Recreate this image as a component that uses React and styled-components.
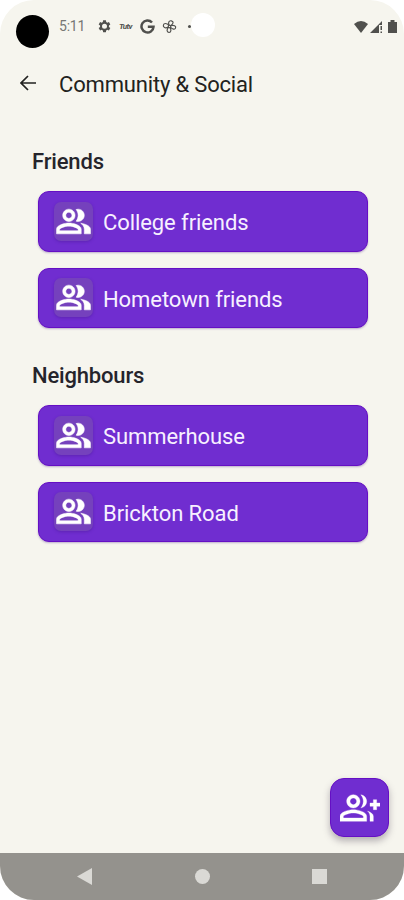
import React from "react"
import styled, { createGlobalStyle } from "styled-components"

const sections = [
  { title: "Friends", groups: ["College friends", "Hometown friends"] },
  { title: "Neighbours", groups: ["Summerhouse", "Brickton Road"] },
]

function GearIcon() {
  return (
    <Icon $size={15} viewBox="0 0 24 24">
      <path
        fillRule="evenodd"
        d="M9.8 2h4.4l.5 2.8 1.7 1 2.7-1 2.2 3.8-2.2 1.8v2.2l2.2 1.8-2.2 3.8-2.7-1-1.7 1-.5 2.8H9.8l-.5-2.8-1.7-1-2.7 1-2.2-3.8 2.2-1.8v-2.2L2.7 8.6l2.2-3.8 2.7 1 1.7-1zM12 7.6a4 4 0 1 0 0 8 4 4 0 0 0 0-8z"
      />
    </Icon>
  )
}

function GoogleIcon() {
  return (
    <Icon $size={15} viewBox="0 0 24 24">
      <path
        fill="none"
        stroke="currentColor"
        strokeWidth="4"
        d="M19.2 5.6A9.6 9.6 0 1 0 21.6 12.5H12.5"
      />
    </Icon>
  )
}

function FanIcon() {
  return (
    <Icon $size={15} viewBox="0 0 24 24">
      <g fill="none" stroke="currentColor" strokeWidth="1.9" transform="rotate(12 12 12)">
        <path d="M11.5 11C8 7 9 2.5 13 2.5s5 4 0 8" />
        <path d="M13.5 10.5c5-3 9-1 8.5 2s-5 3-8.500 0" />
        <path d="M12.5 13c4 3 4 8 .5 8.500s-5-4-2-8.500" />
        <path d="M10.5 13C6 17 2 15.500 2 12s4-5 9-1.500" />
        <circle cx="12" cy="12" r="2" />
      </g>
    </Icon>
  )
}

function GroupIcon() {
  return (
    <Icon $size={37} $stroke={0.35} viewBox="0 0 24 24">
      <path d="M16.67 13.13C18.04 14.06 19 15.32 19 17v3h4v-3c0-2.18-3.57-3.47-6.33-3.87z" />
      <path d="M15 12c2.21 0 4-1.79 4-4s-1.79-4-4-4c-.47 0-.91.1-1.33.24C14.5 5.27 15 6.58 15 8s-.5 2.73-1.33 3.76c.42.14.86.24 1.33.24z" />
      <path d="M9 12c2.21 0 4-1.79 4-4s-1.79-4-4-4-4 1.79-4 4 1.79 4 4 4zm0-6c1.1 0 2 .9 2 2s-.9 2-2 2-2-.9-2-2 .9-2 2-2z" />
      <path d="M9 13c-2.67 0-8 1.34-8 4v3h16v-3c0-2.66-5.33-4-8-4zm6 5H3v-.99C3.2 16.29 6.3 15 9 15s5.8 1.29 6 2v1z" />
    </Icon>
  )
}

function GroupAddIcon() {
  return (
    <Icon $size={40} $stroke={0.2} viewBox="0 0 24 24">
      <path d="M22 9V7h-2v2h-2v2h2v2h2v-2h2V9z" />
      <path d="M8 12c2.21 0 4-1.79 4-4s-1.79-4-4-4-4 1.79-4 4 1.79 4 4 4zm0-6c1.1 0 2 .9 2 2s-.9 2-2 2-2-.9-2-2 .9-2 2-2z" />
      <path d="M8 13c-2.67 0-8 1.34-8 4v3h16v-3c0-2.66-5.33-4-8-4zm6 5H2v-.99C2.2 16.29 5.3 15 8 15s5.8 1.29 6 2v1z" />
      <path d="M12.51 4.05C13.43 5.11 14 6.49 14 8s-.57 2.89-1.49 3.95C14.47 11.7 16 10.04 16 8s-1.53-3.7-3.49-3.95z" />
      <path d="M16.53 13.83C17.42 14.66 18 15.7 18 17v3h2v-3c0-1.45-1.59-2.51-3.47-3.17z" />
    </Icon>
  )
}

function StatusBar() {
  return (
    <Status>
      <Camera />
      <Time>5:11</Time>
      <Notifications>
        <GearIcon />
        <Badge>Tutv</Badge>
        <GoogleIcon />
        <FanIcon />
      </Notifications>
      <MoreDot />
      <Cutout />
      <System>
        <svg width="14" height="12" viewBox="0 0 14 12">
          <path fill="currentColor" d="M0 3Q7-3 14 3L7 12z" />
        </svg>
        <svg width="12" height="12" viewBox="0 0 12 12">
          <path fill="currentColor" d="M0 12L12 0V4H9V12z" />
          <path fill="currentColor" d="M10.5 5H12V9h-1.500zM10.5 10.5H12V12h-1.500z" />
        </svg>
        <svg width="9" height="13" viewBox="0 0 9 13">
          <path fill="currentColor" d="M0 2h2.500V0h4v2H9v11H0z" />
        </svg>
      </System>
    </Status>
  )
}

function App() {
  return (
    <Phone>
      <GlobalStyle />
      <StatusBar />
      <Header>
        <BackButton aria-label="Back">
          <svg width="16" height="16" viewBox="0 0 16 16" fill="none">
            <path d="M8 1L1 8l7 7M1 8h15" stroke="currentColor" strokeWidth="1.7" />
          </svg>
        </BackButton>
        <Title>Community &amp; Social</Title>
      </Header>
      <Main>
        {sections.map((section) => (
          <Section key={section.title}>
            <SectionTitle>{section.title}</SectionTitle>
            <List>
              {section.groups.map((group) => (
                <GroupButton key={group}>
                  <Tile>
                    <GroupIcon />
                  </Tile>
                  <GroupName>{group}</GroupName>
                </GroupButton>
              ))}
            </List>
          </Section>
        ))}
      </Main>
      <Fab aria-label="Add group">
        <GroupAddIcon />
      </Fab>
      <NavBar>
        <svg width="15" height="17" viewBox="0 0 15 17">
          <path fill="currentColor" d="M15 0v17L0 8.5z" />
        </svg>
        <HomeDot />
        <RecentSquare />
      </NavBar>
    </Phone>
  )
}

const GlobalStyle = createGlobalStyle`
  * {
    box-sizing: border-box;
  }
  body {
    margin: 0;
    background: #fff;
    font-family: Roboto, sans-serif;
  }
  button {
    border: 0;
    padding: 0;
    font: inherit;
  }
`
const Phone = styled.div`
  display: flex;
  flex-direction: column;
  width: 404px;
  height: 900px;
  overflow: hidden;
  border-radius: 34px;
  background: #f6f5ee;
`
const Icon = styled.svg`
  display: block;
  flex: none;
  width: ${(p) => p.$size}px;
  height: ${(p) => p.$size}px;
  fill: currentColor;
  stroke: currentColor;
  stroke-width: ${(p) => p.$stroke || 0};
`
const Status = styled.div`
  display: flex;
  align-items: center;
  flex: none;
  height: 52px;
  padding: 0 7px 0 16px;
  color: #50504d;
`
const Camera = styled.div`
  width: 33px;
  height: 33px;
  margin-top: 11px;
  border-radius: 50%;
  background: #000;
`
const Time = styled.span`
  width: 38px;
  margin-left: 10px;
  font-size: 14px;
  line-height: 16px;
  letter-spacing: -0.2px;
  color: #777774;
`
const Notifications = styled.div`
  display: flex;
  align-items: center;
  gap: 7px;
`
const Badge = styled.span`
  width: 14px;
  font-size: 8px;
  font-style: italic;
  font-weight: 700;
  letter-spacing: -0.7px;
`
const MoreDot = styled.div`
  width: 3px;
  height: 3px;
  margin-left: 11px;
  border-radius: 50%;
  background: #50504d;
`
const Cutout = styled.div`
  width: 24px;
  height: 24px;
  margin-top: -2px;
  border-radius: 50%;
  background: #fff;
`
const System = styled.div`
  display: flex;
  align-items: flex-end;
  gap: 2px;
  margin-left: auto;

  svg:last-child {
    margin-left: 4px;
  }
`
const Header = styled.header`
  display: flex;
  align-items: center;
  flex: none;
  height: 64px;
  padding-left: 20px;
  color: #222220;
`
const BackButton = styled.button`
  display: flex;
  width: 39px;
  margin-top: -2px;
  background: none;
  color: inherit;
`
const Title = styled.h1`
  margin: 0;
  font-size: 22px;
  font-weight: 400;
  letter-spacing: -0.17px;
`
const Main = styled.main`
  display: flex;
  flex: 1;
  flex-direction: column;
  gap: 32px;
  padding: 30px 36px 0 32px;
`
const Section = styled.section`
  display: flex;
  flex-direction: column;
  gap: 14px;
`
const SectionTitle = styled.h2`
  margin: 0;
  font-size: 22px;
  font-weight: 500;
  line-height: 31px;
  letter-spacing: -0.17px;
  color: #25242b;
`
const List = styled.div`
  display: flex;
  flex-direction: column;
  gap: 16px;
  padding-left: 6px;
`
const GroupButton = styled.button`
  display: flex;
  align-items: center;
  gap: 10px;
  height: 60.5px;
  padding-left: 15px;
  border: 1px solid #650fc4;
  border-radius: 11px;
  background: #702dd0;
  box-shadow: 0 1px 2px rgba(80, 40, 140, 0.35);
  color: #f7f0ff;
`
const GroupName = styled.span`
  padding-top: 3px;
  font-size: 22px;
  letter-spacing: -0.08px;
`
const Tile = styled.span`
  display: flex;
  align-items: center;
  justify-content: center;
  width: 39px;
  height: 39px;
  border-radius: 7px;
  background: #7541bd;
  box-shadow: 0 1px 3px rgba(60, 20, 130, 0.35);
  color: #fff;
`
const Fab = styled.button`
  display: flex;
  align-items: center;
  justify-content: center;
  align-self: flex-end;
  flex: none;
  width: 59px;
  height: 59px;
  margin: 0 15px 16px 0;
  border: 1px solid #650fc4;
  border-radius: 14px;
  background: #702dd0;
  box-shadow: 0 4px 7px rgba(60, 50, 70, 0.35);
  color: #fff;
`
const NavBar = styled.nav`
  display: flex;
  align-items: center;
  justify-content: space-between;
  flex: none;
  height: 47px;
  padding: 0 77px;
  background: #94928d;
  color: #dad9d5;
`
const HomeDot = styled.div`
  width: 15px;
  height: 15px;
  border-radius: 50%;
  background: currentColor;
`
const RecentSquare = styled.div`
  width: 15px;
  height: 15px;
  background: currentColor;
`

export default App
